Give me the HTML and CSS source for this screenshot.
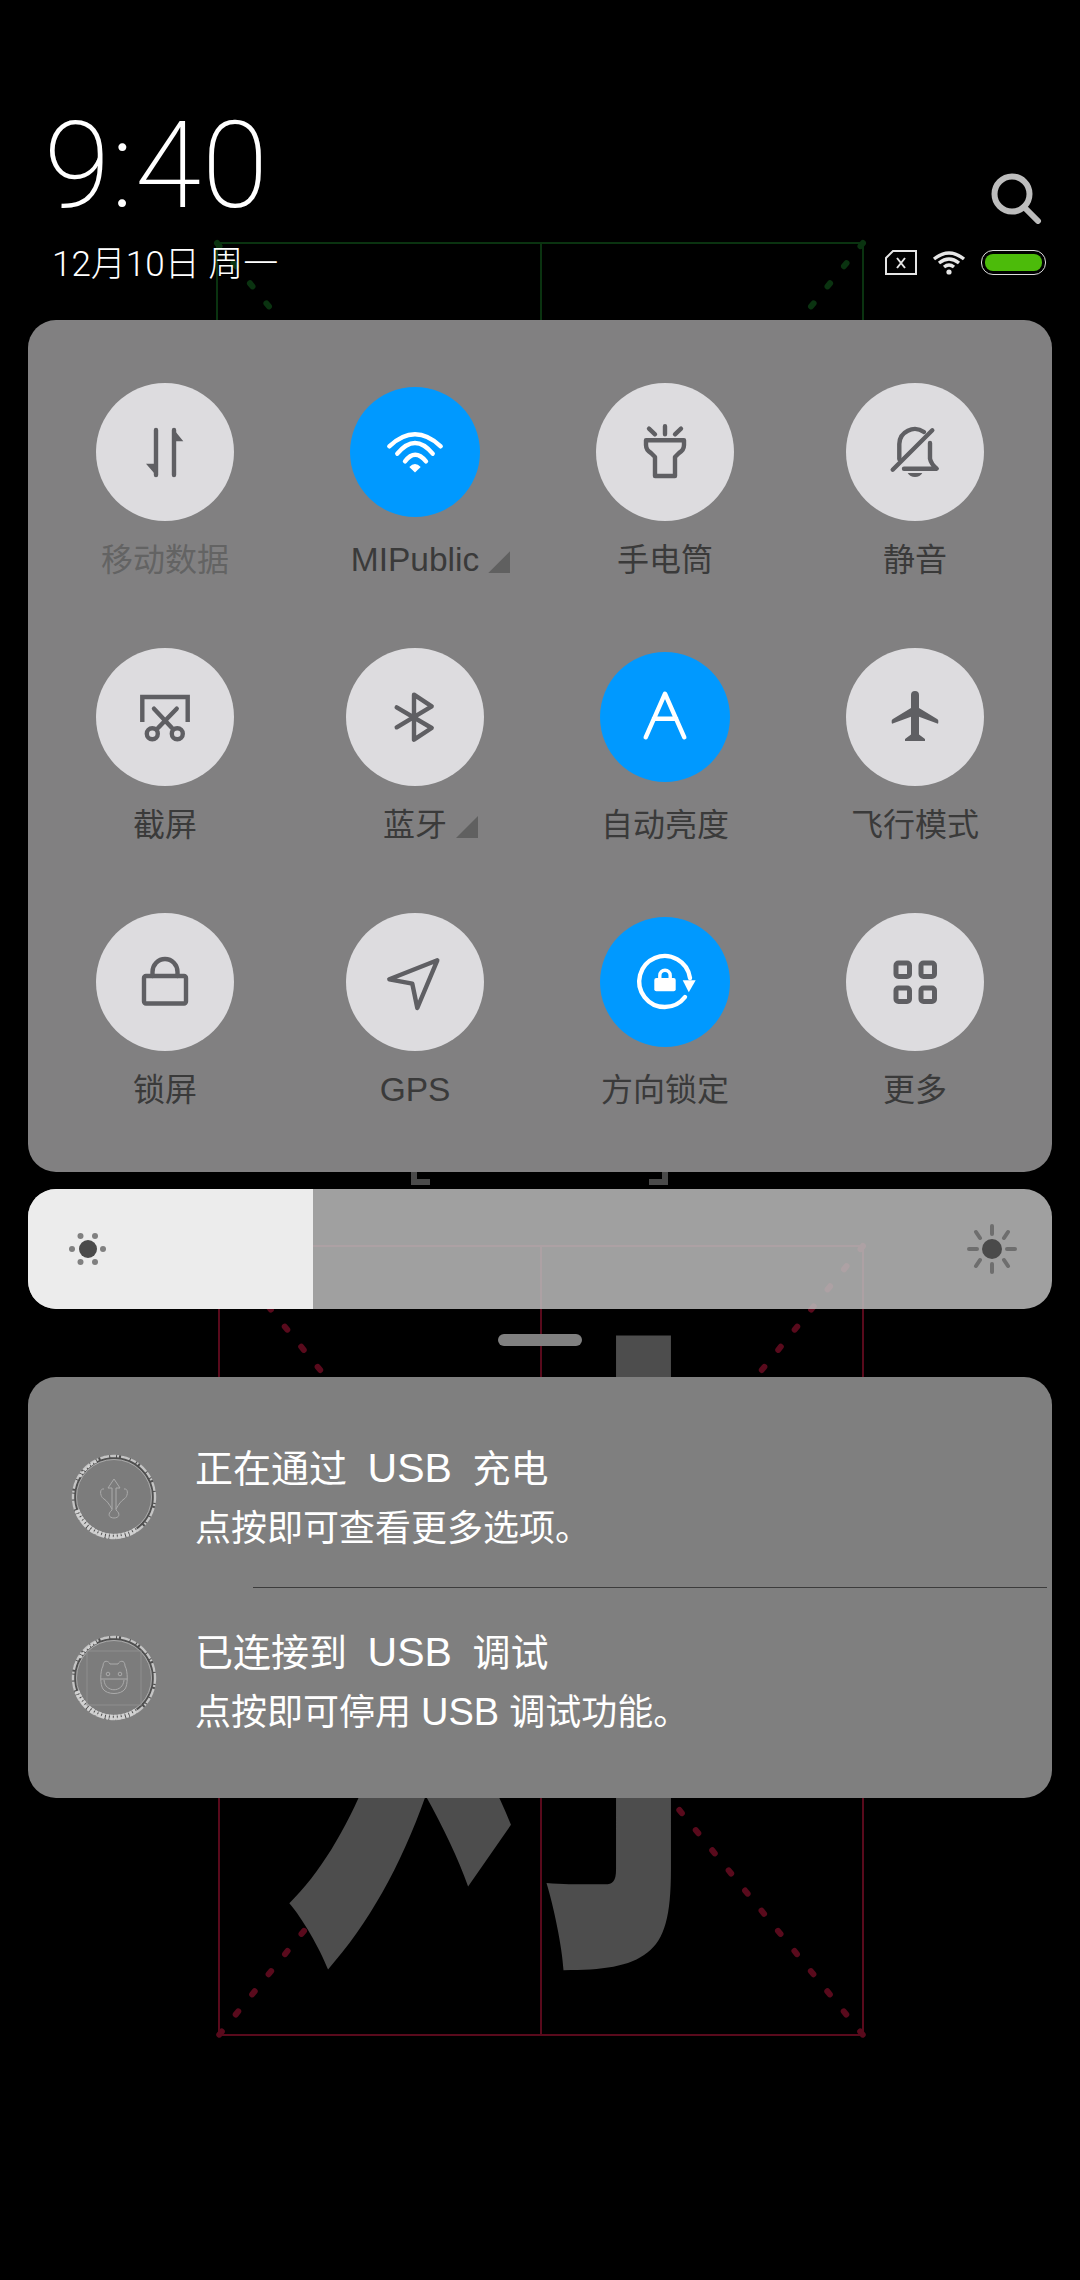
FILE: index.html
```html
<!DOCTYPE html>
<html lang="zh-CN">
<head>
    <meta charset="UTF-8">
    <meta name="viewport" content="width=device-width, initial-scale=1.0">
    <title>控制中心</title>
    <link rel="stylesheet" href="styles.css">
</head>
<body>
    <!-- wallpaper: two practice grids with a big character, sits behind everything -->
    <svg class="wallpaper" width="1080" height="2280" viewBox="0 0 1080 2280">
        <defs>
            <symbol id="ring" viewBox="0 0 86 90">
                <circle class="ring-dark" cx="43" cy="45" r="40"/>
                <circle class="ring-rough" cx="43" cy="45" r="41"/>
                <circle class="ring-thin" cx="43" cy="45" r="37.5"/>
                <path class="ring-heavy" d="M6 58A39.5 39.5 0 0 0 66 77"/>
                <path class="ring-heavy2" d="M9 25A39.5 39.5 0 0 1 26 9"/>
            </symbol>
        </defs>
        <g class="grid-green">
            <rect x="217" y="243" width="646" height="789"/>
            <line x1="541" y1="243" x2="541" y2="1032"/>
            <line class="dots" x1="217" y1="243" x2="863" y2="1032"/>
            <line class="dots" x1="863" y1="243" x2="217" y2="1032"/>
        </g>
        <g class="grid-red">
            <rect x="219" y="1246" width="644" height="789"/>
            <line x1="541" y1="1246" x2="541" y2="2035"/>
            <line class="dots" x1="219" y1="1246" x2="863" y2="2035"/>
            <line class="dots" x1="863" y1="1246" x2="219" y2="2035"/>
        </g>
        <path class="bracket" d="M414 1172V1182H430M665 1172V1182H649"/>
        <text class="big-char" transform="translate(505 1910) scale(0.72 1.056)" text-anchor="middle">对</text>
    </svg>

    <header class="top">
        <div class="top-left">
            <div class="clock">9:40</div>
            <div class="date">12月10日 周一</div>
        </div>
        <div class="top-right">
            <svg class="search" width="52" height="52" viewBox="0 0 52 52">
                <circle cx="22" cy="22" r="17.5"/>
                <path d="M34 35L48 49"/>
            </svg>
            <div class="status">
                <svg class="sim" width="32" height="25" viewBox="0 0 32 25">
                    <path d="M8 1H31V24H1V8Z"/>
                    <path d="M12 8L20 18M20 8L12 18"/>
                </svg>
                <svg class="wifi" width="34" height="25" viewBox="0 0 34 25">
                    <path d="M2 9Q17 -3 32 9"/>
                    <path d="M7 13Q17 5 27 13"/>
                    <path d="M12 17Q17 13 22 17"/>
                    <circle cx="17" cy="22" r="2.6"/>
                </svg>
                <div class="battery"><div class="battery-level"></div></div>
            </div>
        </div>
    </header>

    <main class="stack">
        <section class="panel toggles">
            <div class="tile">
                <div class="toggle">
                    <svg class="ico" width="80" height="80" viewBox="0 0 80 80">
                        <path d="M31 18V63M49 18V63"/>
                        <path class="solid" d="M31 63.3L21 51.7H31ZM49 17.7L58.3 29.3H49Z"/>
                    </svg>
                </div>
                <div class="label label--off"><span>移动数据</span></div>
            </div>
            <div class="tile">
                <div class="toggle toggle--on">
                    <svg class="ico" width="80" height="80" viewBox="0 0 80 80">
                        <path d="M14.3 34.3Q40 10.3 65.7 34.3"/>
                        <path d="M22.3 41.7Q40 20.3 57.7 41.7"/>
                        <path d="M30 49.3Q40 36.1 51 49.3"/>
                        <path class="solid" d="M34.3 55Q40 49 45.7 55L40 60.5Z"/>
                    </svg>
                </div>
                <div class="label label--latin"><span class="more">MIPublic</span></div>
            </div>
            <div class="tile">
                <div class="toggle">
                    <svg class="ico" width="80" height="80" viewBox="0 0 80 80">
                        <path d="M21 28.3H59V33Q59 38 54 41L50 45V64H30V45L26 41Q21 38 21 33Z"/>
                        <path d="M40 14.3V22.3M24 16.7L30 22.3M56 16.7L50 22.3"/>
                    </svg>
                </div>
                <div class="label"><span>手电筒</span></div>
            </div>
            <div class="tile">
                <div class="toggle">
                    <svg class="ico" width="80" height="80" viewBox="0 0 80 80">
                        <path d="M17.7 57.7L57.3 18.3"/>
                        <path d="M24.3 47V32A15.5 15 0 0 1 49 20"/>
                        <path d="M55 31V46.7Q56 52 61.7 56.7H29"/>
                        <path class="solid" d="M32.7 61H47.3Q45 65 40 65Q35 65 32.7 61Z"/>
                    </svg>
                </div>
                <div class="label"><span>静音</span></div>
            </div>

            <div class="tile">
                <div class="toggle">
                    <svg class="ico" width="80" height="80" viewBox="0 0 80 80">
                        <path class="square" d="M17.3 45V20H62.7V45"/>
                        <path d="M29 31.7L47 51M51.7 31.7L33 51"/>
                        <circle cx="27.3" cy="56.7" r="5.5"/>
                        <circle cx="52.3" cy="56.7" r="5.5"/>
                    </svg>
                </div>
                <div class="label"><span>截屏</span></div>
            </div>
            <div class="tile">
                <div class="toggle">
                    <svg class="ico" width="80" height="80" viewBox="0 0 80 80">
                        <path d="M21.7 30.3L56.7 51L39 62.7V17.7L56.7 29.3L21.7 50.3"/>
                    </svg>
                </div>
                <div class="label"><span class="more">蓝牙</span></div>
            </div>
            <div class="tile">
                <div class="toggle toggle--on">
                    <svg class="ico" width="80" height="80" viewBox="0 0 80 80">
                        <path d="M20.7 60.3L40 16.7L59.3 60.3M28.7 41.7H51.3"/>
                    </svg>
                </div>
                <div class="label"><span>自动亮度</span></div>
            </div>
            <div class="tile">
                <div class="toggle">
                    <svg class="ico" width="80" height="80" viewBox="0 0 80 80">
                        <path class="solid" d="M36 18A4 4 0 0 1 44 18V31L62.5 42.2Q63.7 43 63.3 45.5L63 46.7L44 39.7V57.5L50 62V64H30V62L36 57.5V39.7L17 46.7L16.7 45.5Q16.3 43 17.5 42.2L36 31Z"/>
                    </svg>
                </div>
                <div class="label"><span>飞行模式</span></div>
            </div>

            <div class="tile">
                <div class="toggle">
                    <svg class="ico" width="80" height="80" viewBox="0 0 80 80">
                        <rect x="19" y="34" width="42" height="27.5" rx="2"/>
                        <path d="M27.5 34V30A12.5 13 0 0 1 52.5 30V34"/>
                    </svg>
                </div>
                <div class="label"><span>锁屏</span></div>
            </div>
            <div class="tile">
                <div class="toggle">
                    <svg class="ico" width="80" height="80" viewBox="0 0 80 80">
                        <path d="M62.3 18.3L14.3 37.3L37.3 41.7L42.3 66Z"/>
                    </svg>
                </div>
                <div class="label label--latin"><span>GPS</span></div>
            </div>
            <div class="tile">
                <div class="toggle toggle--on">
                    <svg class="ico" width="80" height="80" viewBox="0 0 80 80">
                        <path d="M60 55A25.5 25.5 0 1 1 65 36"/>
                        <path class="solid" d="M57.7 38.3H70.7L63.8 50.3Z"/>
                        <rect class="solid" x="29.3" y="36" width="21.4" height="13.3" rx="2"/>
                        <path class="thin" d="M34.8 36V33.5A5.2 5.2 0 0 1 45.2 33.5V36"/>
                    </svg>
                </div>
                <div class="label"><span>方向锁定</span></div>
            </div>
            <div class="tile">
                <div class="toggle">
                    <svg class="ico ico--heavy" width="80" height="80" viewBox="0 0 80 80">
                        <rect x="21" y="21" width="13.5" height="13.5" rx="2.5"/>
                        <rect x="46" y="21" width="13.5" height="13.5" rx="2.5"/>
                        <rect x="21" y="46" width="13.5" height="13.5" rx="2.5"/>
                        <rect x="46" y="46" width="13.5" height="13.5" rx="2.5"/>
                    </svg>
                </div>
                <div class="label"><span>更多</span></div>
            </div>
        </section>

        <section class="brightness">
            <div class="brightness-fill">
                <svg class="sun-small" width="40" height="40" viewBox="0 0 40 40">
                    <ellipse class="sun-core" cx="20" cy="20" rx="9" ry="9"/>
                    <circle cx="12.5" cy="7" r="3"/>
                    <circle cx="27" cy="7" r="3"/>
                    <circle cx="4" cy="20" r="3"/>
                    <circle cx="35" cy="20" r="3"/>
                    <circle cx="12.5" cy="33" r="3"/>
                    <circle cx="27" cy="33" r="3"/>
                </svg>
            </div>
            <svg class="sun-big" width="50" height="50" viewBox="0 0 50 50">
                <circle class="sun-core" cx="25" cy="25" r="10"/>
                <path d="M25 2V10M25 40V48M2 25H10M40 25H48M9 8L13 14M41 8L37 14M9 42L13 36M41 42L37 36"/>
            </svg>
        </section>

        <div class="handle"></div>

        <section class="panel notices">
            <div class="notice">
                <svg class="notice-icon" width="86" height="90" viewBox="0 0 86 90">
                    <use href="#ring"/>
                    <path class="etch" d="M43 27L37 36H41V58M43 27L49 36H45V58M33 37C28 36 29 45 33 47C36 49 38 52 41 57M53 37C58 36 57 45 53 47C50 49 48 52 45 57M41 58C36 62 38 66 43 66C48 66 50 62 45 58"/>
                </svg>
                <div class="notice-text">
                    <div class="notice-title">正在通过 <span class="notice-title-latin">USB</span> 充电</div>
                    <div class="notice-sub">点按即可查看更多选项。</div>
                </div>
            </div>
            <div class="notice-rule"></div>
            <div class="notice notice--low">
                <svg class="notice-icon" width="86" height="90" viewBox="0 0 86 90">
                    <use href="#ring"/>
                    <rect class="etch-faint" x="16" y="18" width="54" height="54"/>
                    <path class="etch" d="M32 33C32 26 38 28 39 31H47C48 28 54 26 54 33C57 38 57 52 54 56C50 62 36 62 32 56C29 52 29 38 32 33ZM30 46H56M33 47C34 60 52 60 53 47"/>
                    <circle class="etch" cx="37" cy="41" r="1.8"/>
                    <circle class="etch" cx="49" cy="41" r="1.8"/>
                </svg>
                <div class="notice-text">
                    <div class="notice-title">已连接到 <span class="notice-title-latin">USB</span> 调试</div>
                    <div class="notice-sub">点按即可停用 <span class="notice-sub-latin">USB</span> 调试功能。</div>
                </div>
            </div>
        </section>
    </main>
</body>
</html>
```

FILE: styles.css
```css
body {
    margin: 0;
    padding: 0;
    width: 1080px;
    height: 2280px;
    overflow: hidden;
    position: relative;
    background-color: #000;
    font-family: "Liberation Sans", "Noto Sans CJK SC", sans-serif;
}

/* wallpaper */
.wallpaper {
    position: absolute;
    left: 0;
    top: 0;
}
.wallpaper rect,
.wallpaper line {
    fill: none;
    stroke-width: 2;
}
.wallpaper .dots {
    stroke-width: 6;
    stroke-linecap: round;
    stroke-dasharray: 4 22;
}
.grid-green rect,
.grid-green line {
    stroke: #0a3310;
}
.grid-red rect,
.grid-red line {
    stroke: #590a1c;
}
.bracket {
    fill: none;
    stroke: #4a4a4a;
    stroke-width: 6;
}
.big-char {
    font-family: "Noto Sans CJK SC", sans-serif;
    font-weight: 700;
    font-size: 640px;
    fill: #4d4d4d;
}

/* clock and status row */
.top {
    position: relative;
    height: 320px;
    box-sizing: border-box;
    padding: 104px 34px 0 44px;
    display: flex;
    justify-content: space-between;
    color: #fff;
}
.clock {
    font-family: Roboto, sans-serif;
    font-weight: 200;
    font-size: 120px;
    line-height: 125px;
    letter-spacing: 1px;
}
.date {
    margin-top: 14px;
    margin-left: 8px;
    font-family: Roboto, "Noto Sans CJK SC", sans-serif;
    font-weight: 300;
    font-size: 35px;
    line-height: 44px;
}
.top-right {
    margin-top: 68px;
    display: flex;
    flex-direction: column;
    align-items: flex-end;
}
.search {
    margin-right: 4px;
    fill: none;
    stroke: #bdbdbd;
    stroke-width: 6;
    stroke-linecap: round;
}
.status {
    margin-top: 26px;
    display: flex;
    gap: 15px;
}
.sim {
    fill: none;
    stroke: #e6e6e6;
    stroke-width: 2;
}
.wifi {
    fill: none;
    stroke: #e6e6e6;
    stroke-width: 3.4;
}
.wifi circle {
    fill: #e6e6e6;
    stroke: none;
}
.battery {
    width: 65px;
    height: 25px;
    box-sizing: border-box;
    padding: 3px;
    border: 1.5px solid #dcdcdc;
    border-radius: 12px;
}
.battery-level {
    height: 100%;
    background-color: #4cbb0a;
    border-radius: 8px;
}

/* panels */
.stack {
    position: relative;
    margin: 0 28px;
}
.panel {
    border-radius: 28px;
}
.toggles {
    box-sizing: border-box;
    height: 852px;
    padding: 63px 12px;
    background-color: #818081;
    display: grid;
    grid-template-columns: repeat(4, 250px);
    row-gap: 66px;
}
.tile {
    display: flex;
    flex-direction: column;
    align-items: center;
}
.toggle {
    width: 138px;
    height: 138px;
    box-sizing: border-box;
    border-radius: 50%;
    background-color: #dddcdf;
    display: flex;
    align-items: center;
    justify-content: center;
}
.toggle--on {
    border: 4px solid transparent;
    background-color: #0099ff;
    background-clip: padding-box;
}
.ico {
    flex: none;
    fill: none;
    stroke: #5f5f63;
    stroke-width: 4.4;
    stroke-linecap: round;
    stroke-linejoin: round;
}
.ico--heavy {
    stroke-width: 5;
}
.ico .solid {
    fill: #5f5f63;
    stroke: none;
}
.ico .square {
    stroke-linecap: butt;
    stroke-linejoin: miter;
}
.toggle--on .ico {
    stroke: #fff;
}
.toggle--on .ico .solid {
    fill: #fff;
}
.toggle--on .ico .thin {
    stroke-width: 3.4;
}
.label {
    margin-top: 17px;
    font-size: 32px;
    line-height: 44px;
    color: #3a3a3a;
}
.label--latin {
    font-size: 33.5px;
}
.label--off {
    color: #636363;
}
.label span {
    position: relative;
    display: block;
}
/* little corner triangle on toggles that open a detail page */
.more::after {
    content: "";
    position: absolute;
    left: 100%;
    top: 13px;
    margin-left: 9px;
    width: 22px;
    height: 22px;
    background-color: #606060;
    clip-path: polygon(100% 0, 100% 100%, 0 100%);
}

/* brightness slider */
.brightness {
    margin-top: 17px;
    height: 120px;
    border-radius: 28px;
    overflow: hidden;
    background-color: rgba(188, 188, 188, 0.85);
    display: flex;
    align-items: center;
    justify-content: space-between;
}
.brightness-fill {
    width: 285px;
    height: 100%;
    box-sizing: border-box;
    padding-left: 40px;
    background-color: #ececec;
    display: flex;
    align-items: center;
}
.sun-small {
    fill: #808080;
}
.sun-core {
    fill: #4a4a4a;
    stroke: none;
}
.sun-big {
    margin-right: 35px;
    fill: none;
    stroke: #6e6e6e;
    stroke-width: 4;
    stroke-linecap: round;
}

.handle {
    width: 84px;
    height: 12px;
    margin: 25px auto 31px;
    border-radius: 6px;
    background-color: #808080;
}

/* notifications */
.notices {
    box-sizing: border-box;
    height: 421px;
    padding: 30px 0;
    background-color: #7f7f7f;
}
.notice {
    height: 180px;
    box-sizing: border-box;
    padding-left: 43px;
    display: flex;
    align-items: center;
    gap: 38px;
}
.notice-text {
    padding-top: 3px;
}
.notice--low .notice-text {
    padding-top: 9px;
}
.notice-icon {
    flex: none;
}
.notice-rule {
    height: 1px;
    margin: 0 5px 0 225px;
    background-color: #3c3c3c;
}
.notice-title,
.notice-sub {
    line-height: 59px;
    color: #fff;
}
.notice-title {
    font-size: 38px;
    word-spacing: 10px;
}
.notice-title-latin {
    font-size: 41px;
}
.notice-sub {
    font-size: 36px;
}
.notice-sub-latin {
    font-size: 38px;
}
.ring-dark {
    fill: #7c7c7c;
    stroke: #4f4f4f;
    stroke-width: 4;
}
.ring-rough {
    fill: none;
    stroke: #c4c4c4;
    stroke-width: 2.4;
    stroke-dasharray: 6 1 2 2 9 1;
}
.ring-thin {
    fill: none;
    stroke: #a9a9a9;
    stroke-width: 1;
}
.ring-heavy,
.ring-heavy2 {
    fill: none;
    stroke: #d2d2d2;
    stroke-dasharray: 3 1;
}
.ring-heavy {
    stroke-width: 5;
}
.ring-heavy2 {
    stroke-width: 2.5;
}
.etch {
    fill: none;
    stroke: #ababab;
    stroke-width: 1;
}
.etch-faint {
    fill: none;
    stroke: #8e8e8e;
    stroke-width: 1;
}
```
